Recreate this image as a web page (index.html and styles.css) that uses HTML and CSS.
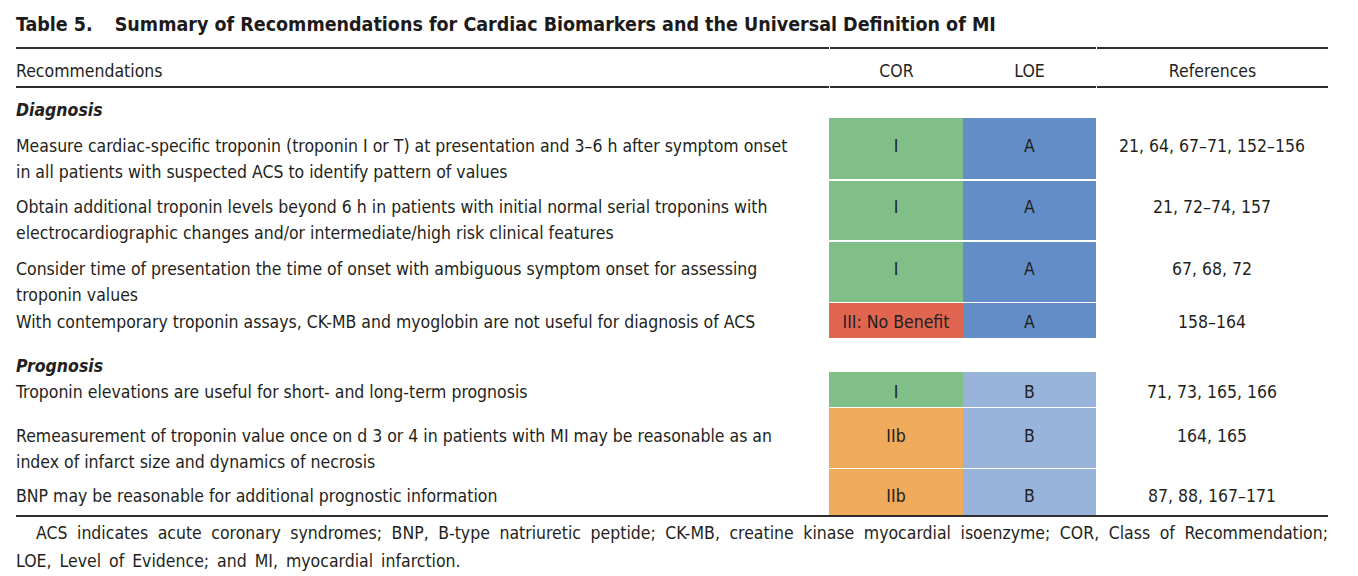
FILE: index.html
```html
<!DOCTYPE html>
<html lang="en">
<head>
<meta charset="utf-8">
<title>Table 5</title>
<link rel="stylesheet" href="styles.css">
</head>
<body>
<div class="page">
  <h1 class="title"><span class="tnum">Table 5.</span>Summary of Recommendations for Cardiac Biomarkers and the Universal Definition of MI</h1>
  <div class="tbl">
    <div class="row head">
      <div class="h-rec">Recommendations</div>
      <div class="h-c h-brk">COR</div>
      <div class="h-c">LOE</div>
      <div class="h-c h-brk">References</div>
    </div>
    <div class="sec sec-first">Diagnosis</div>
    <div class="row r1">
      <div class="rec">Measure cardiac-specific troponin (troponin I or T) at presentation and 3–6 h after symptom onset in all patients with suspected ACS to identify pattern of values</div>
      <div class="cell green gap">I</div><div class="cell blue gap">A</div>
      <div class="ref">21, 64, 67–71, 152–156</div>
    </div>
    <div class="row r2">
      <div class="rec">Obtain additional troponin levels beyond 6 h in patients with initial normal serial troponins with electrocardiographic changes and/or intermediate/high risk clinical features</div>
      <div class="cell green gap">I</div><div class="cell blue gap">A</div>
      <div class="ref">21, 72–74, 157</div>
    </div>
    <div class="row r3">
      <div class="rec">Consider time of presentation the time of onset with ambiguous symptom onset for assessing troponin values</div>
      <div class="cell green gap1">I</div><div class="cell blue gap1">A</div>
      <div class="ref">67, 68, 72</div>
    </div>
    <div class="row r4">
      <div class="rec">With contemporary troponin assays, CK-MB and myoglobin are not useful for diagnosis of ACS</div>
      <div class="cell red">III: No Benefit</div><div class="cell blue">A</div>
      <div class="ref">158–164</div>
    </div>
    <div class="sec sec-next">Prognosis</div>
    <div class="row r5">
      <div class="rec">Troponin elevations are useful for short- and long-term prognosis</div>
      <div class="cell green gap1">I</div><div class="cell lblue gap1">B</div>
      <div class="ref">71, 73, 165, 166</div>
    </div>
    <div class="row r6">
      <div class="rec">Remeasurement of troponin value once on d 3 or 4 in patients with MI may be reasonable as an index of infarct size and dynamics of necrosis</div>
      <div class="cell orange gap1">IIb</div><div class="cell lblue gap1">B</div>
      <div class="ref">164, 165</div>
    </div>
    <div class="row r7">
      <div class="rec">BNP may be reasonable for additional prognostic information</div>
      <div class="cell orange">IIb</div><div class="cell lblue">B</div>
      <div class="ref">87, 88, 167–171</div>
    </div>
  </div>
  <p class="note">ACS indicates acute coronary syndromes; BNP, B-type natriuretic peptide; CK-MB, creatine kinase myocardial isoenzyme; COR, Class of Recommendation; LOE, Level of Evidence; and MI, myocardial infarction.</p>
</div>
</body>
</html>
```

FILE: styles.css
```css
* { box-sizing: border-box; }
html, body { margin: 0; padding: 0; background: #fff; }
body {
  font-family: "Liberation Sans Narrow", "Arial Narrow", "DejaVu Sans Condensed", sans-serif;
  color: #231f20;
  font-size: 17.5px;
}
.page { padding: 0 30px 0 16px; width: 1358px; }
.title {
  margin: 0;
  height: 47px;
  padding-top: 13px;
  font-size: 19.5px;
  line-height: 24px;
  font-weight: bold;
  color: #1d1a1b;
}
.tnum { display: inline-block; margin-right: 22px; }
.tbl { width: 1312px; }
.row {
  display: grid;
  grid-template-columns: 813px 134px 133px 232px;
  grid-template-rows: 100%;
  line-height: 26px;
}
.row > div { padding-top: var(--pt); }
.head { height: 41px; --pt: 9px; }
.head > div {
  border-top: 2px solid #2e2c2d;
  border-bottom: 2px solid #2e2c2d;
}
.h-brk { margin-left: 1px; }
.h-c { text-align: center; }
.sec {
  font-weight: bold;
  font-style: italic;
  line-height: 24px;
}
.sec-first { height: 30px; padding-top: 10px; }
.sec-next { height: 34px; padding-top: 16px; }
.rec { padding-right: 28px; }
.cell, .ref { text-align: center; }
.gap { border-bottom: 2px solid #fff; }
.gap1 { border-bottom: 1px solid #fff; }
.green { background: #80c088; }
.blue { background: #628dc6; }
.lblue { background: #98b4db; }
.red { background: #e06550; }
.orange { background: #efaa5c; }
.r1 { height: 63px; --pt: 15px; }
.r2 { height: 61px; --pt: 13px; }
.r3 { height: 61px; --pt: 14px; }
.r4 { height: 35px; --pt: 6px; }
.r5 { height: 36px; --pt: 7px; }
.r6 { height: 61px; --pt: 15px; }
.r7 { height: 48px; --pt: 14px; border-bottom: 2px solid #2e2c2d; }
.note {
  margin: 0;
  padding-top: 2px;
  line-height: 28px;
  text-indent: 20px;
  text-align: justify;
  word-spacing: 3px;
}
```
